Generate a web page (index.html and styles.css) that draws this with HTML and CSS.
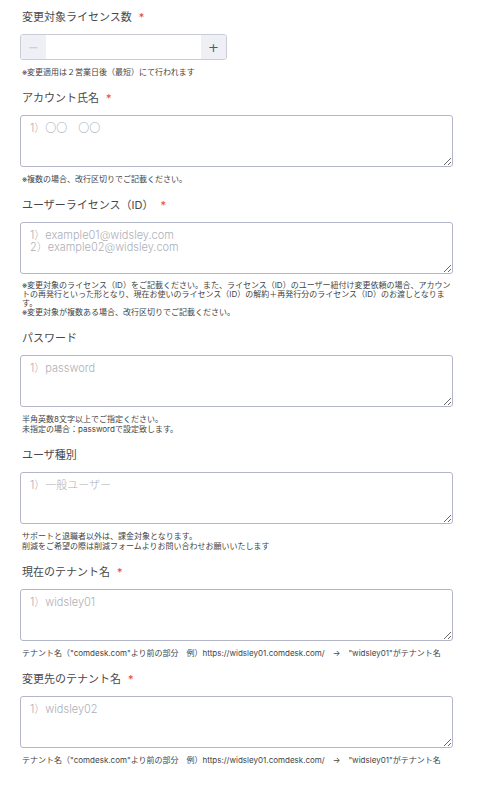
FILE: index.html
```html
<!DOCTYPE html>
<html lang="ja">
<head>
  <meta charset="UTF-8">
  <title>ライセンス変更</title>
  <link rel="stylesheet" href="styles.css">
</head>
<body>
  <form class="change-form">
    <div class="field">
      <label class="field-label">変更対象ライセンス数<span class="required">*</span></label>
      <div class="number-input">
        <button type="button" class="step step-minus">−</button>
        <input type="text" class="number-value" value="">
        <button type="button" class="step step-plus">+</button>
      </div>
      <p class="note">※変更適用は２営業日後（最短）にて行われます</p>
    </div>

    <div class="field">
      <label class="field-label">アカウント氏名<span class="required">*</span></label>
      <textarea placeholder="1）〇〇　〇〇"></textarea>
      <p class="note">※複数の場合、改行区切りでご記載ください。</p>
    </div>

    <div class="field">
      <label class="field-label">ユーザーライセンス（ID）<span class="required">*</span></label>
      <textarea placeholder="1）example01@widsley.com&#10;2）example02@widsley.com"></textarea>
      <p class="note note-tight">※変更対象のライセンス（ID）をご記載ください。また、ライセンス（ID）のユーザー紐付け変更依頼の場合、アカウントの再発行といった形となり、現在お使いのライセンス（ID）の解約＋再発行分のライセンス（ID）のお渡しとなります。<br>※変更対象が複数ある場合、改行区切りでご記載ください。</p>
    </div>

    <div class="field">
      <label class="field-label">パスワード</label>
      <textarea placeholder="1）password"></textarea>
      <p class="note">半角英数8文字以上でご指定ください。<br>未指定の場合：passwordで設定致します。</p>
    </div>

    <div class="field">
      <label class="field-label">ユーザ種別</label>
      <textarea placeholder="1）一般ユーザー"></textarea>
      <p class="note">サポートと退職者以外は、課金対象となります。<br>削減をご希望の際は削減フォームよりお問い合わせお願いいたします</p>
    </div>

    <div class="field">
      <label class="field-label">現在のテナント名<span class="required">*</span></label>
      <textarea placeholder="1）widsley01"></textarea>
      <p class="note">テナント名（"comdesk.com"より前の部分　例）https://widsley01.comdesk.com/　→　"widsley01"がテナント名</p>
    </div>

    <div class="field">
      <label class="field-label">変更先のテナント名<span class="required">*</span></label>
      <textarea placeholder="1）widsley02"></textarea>
      <p class="note">テナント名（"comdesk.com"より前の部分　例）https://widsley01.comdesk.com/　→　"widsley01"がテナント名</p>
    </div>
  </form>
</body>
</html>
```

FILE: styles.css
```css
* {
  box-sizing: border-box;
}

body {
  margin: 0;
  background: #ffffff;
  font-family: Inter, "Noto Sans CJK JP", sans-serif;
  color: #333333;
}

.change-form {
  padding: 9px 26px 0 20px;
}

.field {
  margin-bottom: 13px;
}

.field-label {
  display: block;
  padding-left: 2px;
  font-size: 11px;
  line-height: 16px;
  margin-bottom: 9px;
  color: #48484c;
}

.required {
  color: #e8453c;
  margin-left: 7px;
}

.number-input {
  display: flex;
  width: 207px;
  height: 26px;
  border: 1px solid #c9ccd8;
  border-radius: 3px;
  overflow: hidden;
}

.step {
  width: 25px;
  border: none;
  background: #eff0f5;
  font-family: "DejaVu Sans", sans-serif;
  font-size: 13px;
  padding: 0;
  color: #555a66;
}

.step-minus {
  color: #c8cad4;
}

.number-value {
  flex: 1;
  border: none;
  min-width: 0;
  outline: none;
}

textarea {
  display: block;
  width: 100%;
  height: 52px;
  border: 1px solid #b3b6c8;
  border-radius: 3px;
  padding: 6px 9px;
  font-family: Inter, "Noto Sans CJK JP", sans-serif;
  font-size: 11px;
  font-weight: 300;
  line-height: 12px;
  color: #333333;
  resize: vertical;
}

textarea::placeholder {
  color: #aeafb8;
}

.note {
  margin: 7px 0 0 2px;
  font-size: 8px;
  line-height: 10px;
  color: #444444;
}

.note-tight {
  line-height: 9px;
}
```
